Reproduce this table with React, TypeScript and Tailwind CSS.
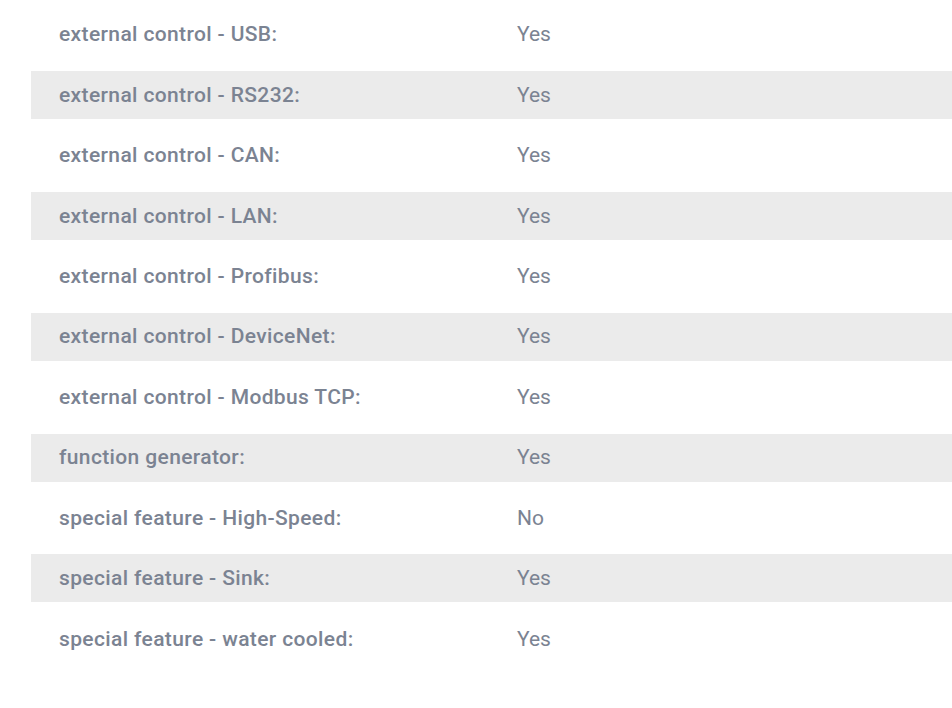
import React from "react";

const rows: [string, string][] = [
  ["external control - USB:", "Yes"],
  ["external control - RS232:", "Yes"],
  ["external control - CAN:", "Yes"],
  ["external control - LAN:", "Yes"],
  ["external control - Profibus:", "Yes"],
  ["external control - DeviceNet:", "Yes"],
  ["external control - Modbus TCP:", "Yes"],
  ["function generator:", "Yes"],
  ["special feature - High-Speed:", "No"],
  ["special feature - Sink:", "Yes"],
  ["special feature - water cooled:", "Yes"],
];

export default function App() {
  return (
    <div
      className="w-[952px] h-[708px] bg-white overflow-hidden pl-[31px] pt-[10.5px]"
      style={{ fontFamily: "Roboto, 'Noto Sans', sans-serif" }}
    >
      <div className="flex flex-col gap-[12.45px]">
        {rows.map(([k, v], i) => (
          <div
            key={k}
            className={`flex items-center h-12 pl-[28px] pt-[1px] text-[21px] text-[#7b8392] ${
              i % 2 === 1 ? "bg-[#ebebeb]" : "bg-white"
            }`}
          >
            <div className="w-[458px] font-medium tracking-[0.37px]">{k}</div>
            <div className="font-normal">{v}</div>
          </div>
        ))}
      </div>
    </div>
  );
}
